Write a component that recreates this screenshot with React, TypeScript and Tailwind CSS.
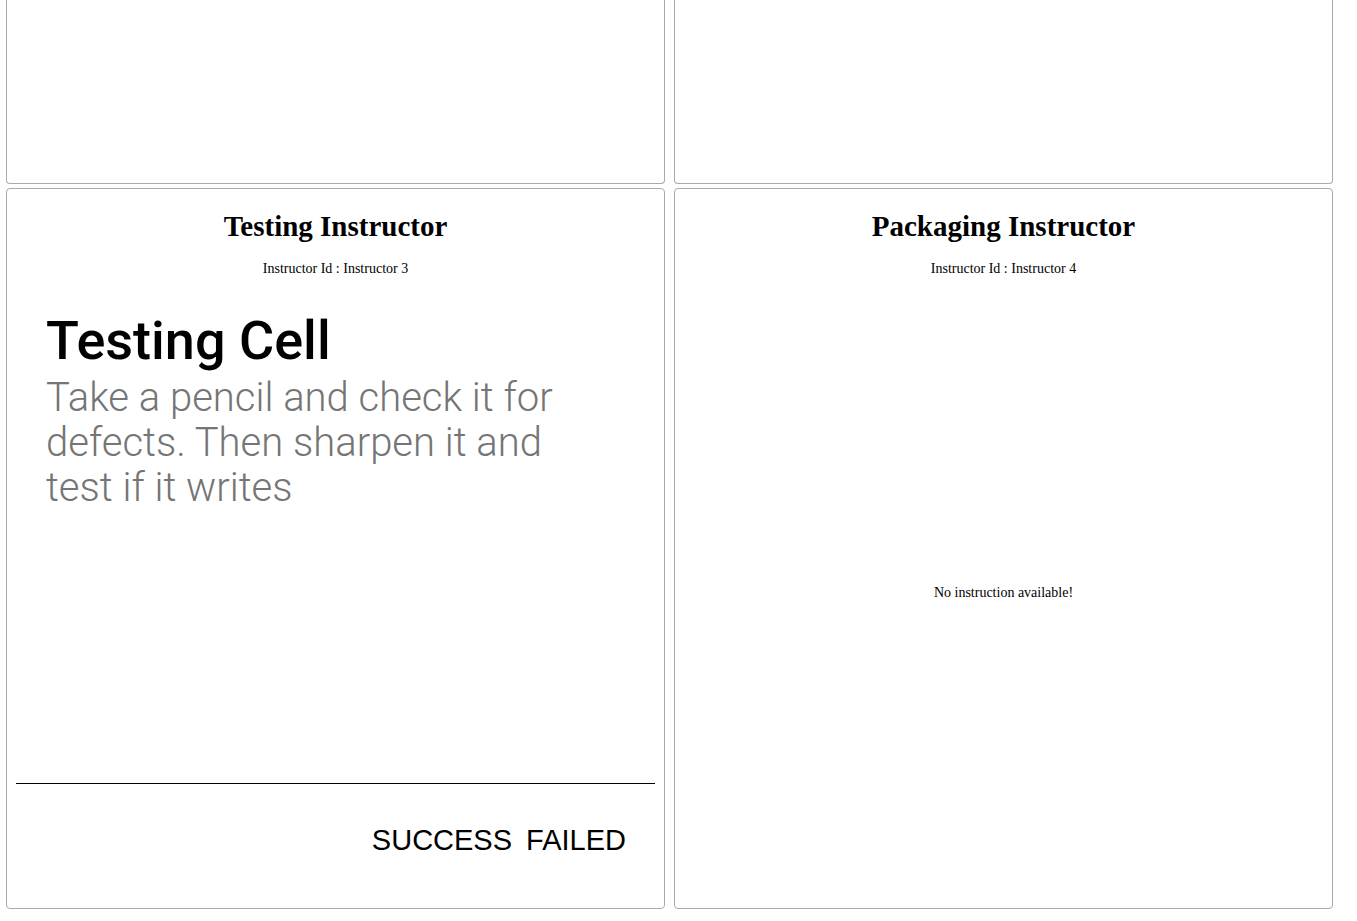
import React from "react";

const serif = { fontFamily: '"Liberation Serif", "Times New Roman", serif' };

export default function App() {
  return (
    <div className="min-h-screen bg-white pl-[6px]" style={serif}>
      <div className="flex gap-[9px]">
        <div className="h-[184px] w-[659px] rounded-b-[4px] border-x border-b border-[#aaaaaa]" />
        <div className="h-[184px] w-[659px] rounded-b-[4px] border-x border-b border-[#aaaaaa]" />
      </div>
      <div className="mt-[4px] flex gap-[9px]">
        <div className="flex h-[721px] w-[659px] flex-col rounded-[4px] border border-[#aaaaaa]">
          <div className="pt-[21px] text-center">
            <h2 className="text-[29px] font-bold leading-[32px] text-black" style={serif}>Testing Instructor</h2>
            <p className="mt-[19px] text-[14px] leading-[16px] text-black">Instructor Id : Instructor 3</p>
          </div>
          <div className="flex-1 pl-[39px] pt-[32px]" style={{ fontFamily: 'Roboto, "Noto Sans", sans-serif' }}>
            <h1 className="mb-[2px] text-[54px] font-medium leading-[64px] text-black">Testing Cell</h1>
            <p className="w-[560px] text-[40px] font-light leading-[45px] text-[#757575]">
              Take a pencil and check it for defects. Then sharpen it and test if it writes
            </p>
          </div>
          <div className="mx-[9px] h-px bg-black" />
          <div
            className="flex h-[124px] items-center justify-end gap-[14px] pr-[38px] pb-[10px] text-[29px] text-black"
            style={{ fontFamily: '"Liberation Sans", Arial, sans-serif' }}
          >
            <span>SUCCESS</span>
            <span>FAILED</span>
          </div>
        </div>
        <div className="flex h-[721px] w-[659px] flex-col rounded-[4px] border border-[#aaaaaa]">
          <div className="pt-[21px] text-center">
            <h2 className="text-[29px] font-bold leading-[32px] text-black" style={serif}>Packaging Instructor</h2>
            <p className="mt-[19px] text-[14px] leading-[16px] text-black">Instructor Id : Instructor 4</p>
          </div>
          <div className="flex flex-1 items-center justify-center">
            <p className="text-[14px] text-black">No instruction available!</p>
          </div>
        </div>
      </div>
    </div>
  );
}
